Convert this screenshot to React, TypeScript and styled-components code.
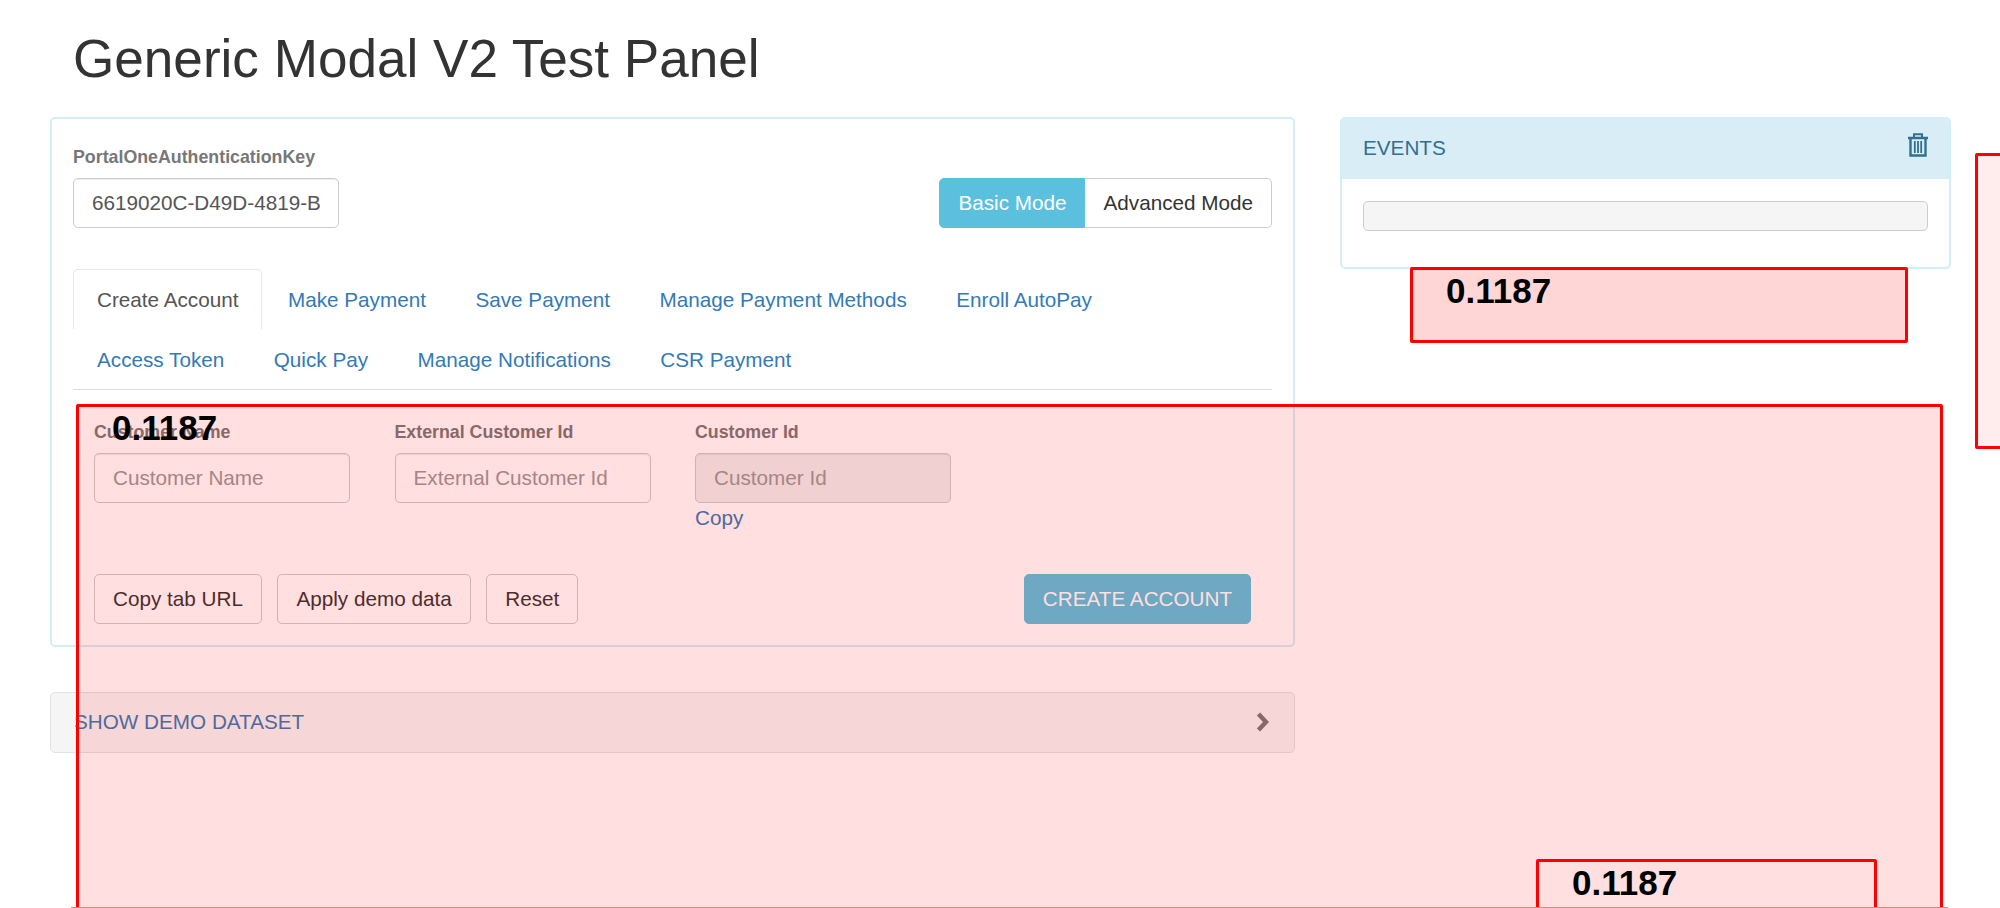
import styled, { createGlobalStyle } from 'styled-components';

const firstTabs = ['Make Payment', 'Save Payment', 'Manage Payment Methods', 'Enroll AutoPay'];
const secondTabs = ['Access Token', 'Quick Pay', 'Manage Notifications', 'CSR Payment'];

function App() {
  return (
    <Page>
      <GlobalStyle />
      <Title>Generic Modal V2 Test Panel</Title>
      <Columns>
        <MainColumn>
          <MainPanel>
            <TopRow>
              <div>
                <FieldLabel>PortalOneAuthenticationKey</FieldLabel>
                <KeyInput readOnly value="6619020C-D49D-4819-B" />
              </div>
              <ModeGroup>
                <ModeButton $active>Basic Mode</ModeButton>
                <ModeButton>Advanced Mode</ModeButton>
              </ModeGroup>
            </TopRow>
            <Tabs>
              <Tab $active>Create Account</Tab>
              {firstTabs.map((t) => (
                <Tab key={t}>{t}</Tab>
              ))}
              <Break />
              {secondTabs.map((t) => (
                <Tab key={t}>{t}</Tab>
              ))}
            </Tabs>
            <TabBody>
              <Fields>
                <Field>
                  <FieldLabel>Customer Name</FieldLabel>
                  <TextInput placeholder="Customer Name" />
                </Field>
                <Field>
                  <FieldLabel>External Customer Id</FieldLabel>
                  <TextInput placeholder="External Customer Id" />
                </Field>
                <Field>
                  <FieldLabel>Customer Id</FieldLabel>
                  <TextInput placeholder="Customer Id" disabled />
                  <CopyLink>Copy</CopyLink>
                </Field>
              </Fields>
              <Actions>
                <Button>Copy tab URL</Button>
                <Button>Apply demo data</Button>
                <Button>Reset</Button>
                <SubmitButton>CREATE ACCOUNT</SubmitButton>
              </Actions>
            </TabBody>
          </MainPanel>
          <DemoBar>
            <DemoLink>SHOW DEMO DATASET</DemoLink>
            <svg width="13" height="20" viewBox="0 0 13 20">
              <polyline points="2.5,2 10,10 2.5,18" fill="none" stroke="#777" strokeWidth="4.5" />
            </svg>
          </DemoBar>
        </MainColumn>
        <SideColumn>
          <EventsHeader>
            <EventsTitle>EVENTS</EventsTitle>
            <svg width="20" height="24" viewBox="0 0 20 24">
              <g fill="none" stroke="#31708f">
                <path d="M0 5h20" strokeWidth="2.4" />
                <path d="M6 4V1.2h8V4" strokeWidth="2" />
                <path d="M2.5 6v16.5h15V6" strokeWidth="2.4" />
                <path d="M6.8 8v12M10 8v12M13.2 8v12" strokeWidth="1.8" />
              </g>
            </svg>
          </EventsHeader>
          <EventsBody>
            <Well />
          </EventsBody>
        </SideColumn>
      </Columns>
      <Marker $left={76} $top={404} $width={1867} $height={520} $alpha={0.125}>
        <Score>0.1187</Score>
      </Marker>
      <Marker $left={1410} $top={267} $width={498} $height={76} $alpha={0.16}>
        <Score>0.1187</Score>
      </Marker>
      <Marker $left={1536} $top={859} $width={341} $height={70} $alpha={0}>
        <Score>0.1187</Score>
      </Marker>
      <Marker $left={1975} $top={153} $width={120} $height={296} $alpha={0.07} />
      <BottomEdge />
    </Page>
  );
}

const GlobalStyle = createGlobalStyle`
  html, body {
    margin: 0;
    padding: 0;
    background: #fff;
  }
  body {
    font-family: "Liberation Sans", Arial, sans-serif;
    font-size: 20.7px;
    color: #333;
  }
  * {
    box-sizing: border-box;
  }
`;

const Page = styled.div`
  position: relative;
  width: 2000px;
  height: 908px;
  overflow: hidden;
`;

const Title = styled.h1`
  margin: 0;
  padding: 29px 0 0 73px;
  height: 117px;
  font-size: 53.1px;
  font-weight: 400;
  line-height: 60px;
  color: #333;
`;

const Columns = styled.div`
  display: flex;
  padding-left: 50px;
  gap: 45px;
  align-items: flex-start;
`;

const MainColumn = styled.div`
  width: 1245px;
`;

const SideColumn = styled.div`
  width: 611px;
  height: 152px;
  border: 2px solid #d3eef6;
  border-radius: 5px;
  overflow: hidden;
`;

const MainPanel = styled.div`
  height: 530px;
  padding: 28px 21px 0;
  border: 2px solid #d3eef6;
  border-radius: 5px;
`;

const TopRow = styled.div`
  display: flex;
  justify-content: space-between;
  align-items: flex-end;
`;

const FieldLabel = styled.label`
  display: block;
  height: 20px;
  margin-bottom: 11px;
  font-size: 17.8px;
  font-weight: 700;
  line-height: 20px;
  color: #777;
`;

const TextInput = styled.input`
  display: block;
  width: 100%;
  height: 50px;
  padding: 0 18px;
  border: 1.5px solid #ccc;
  border-radius: 5px;
  background: #fff;
  font: inherit;
  color: #555;
  box-shadow: inset 0 1px 1px rgba(0, 0, 0, 0.075);

  &::placeholder {
    color: #999;
  }

  &:disabled {
    background: #eee;
  }
`;

const KeyInput = styled(TextInput)`
  width: 266px;
`;

const ModeGroup = styled.div`
  display: flex;
`;

const ModeButton = styled.button<{ $active?: boolean }>`
  height: 50px;
  padding: 0 18px;
  border: 1.5px solid ${({ $active }) => ($active ? '#5bc0de' : '#ccc')};
  border-left-width: ${({ $active }) => ($active ? '1.5px' : '0')};
  border-radius: ${({ $active }) => ($active ? '5px 0 0 5px' : '0 5px 5px 0')};
  background: ${({ $active }) => ($active ? '#5bc0de' : '#fff')};
  color: ${({ $active }) => ($active ? '#fff' : '#333')};
  font: inherit;
`;

const Tabs = styled.div`
  display: flex;
  flex-wrap: wrap;
  margin-top: 41px;
  padding-bottom: 0;
  border-bottom: 1.5px solid #ddd;
`;

const Break = styled.div`
  flex-basis: 100%;
  height: 0;
`;

const Tab = styled.a<{ $active?: boolean }>`
  height: 60px;
  margin-right: 1.5px;
  padding: 0 23px;
  border: 1.5px solid ${({ $active }) => ($active ? '#e6e6e6' : 'transparent')};
  border-bottom: 0;
  border-radius: 5px 5px 0 0;
  color: ${({ $active }) => ($active ? '#555' : '#337ab7')};
  line-height: 60px;
`;

const TabBody = styled.div`
  padding: 32px 21px 0;
`;

const Fields = styled.div`
  display: flex;
  gap: 44.5px;
  min-height: 116px;
`;

const Field = styled.div`
  width: 256px;
`;

const CopyLink = styled.a`
  display: block;
  margin-top: 3px;
  color: #337ab7;
  line-height: 24px;
`;

const Actions = styled.div`
  display: flex;
  gap: 15.5px;
  margin-top: 36px;
`;

const Button = styled.button`
  height: 50px;
  padding: 0 18px;
  border: 1.5px solid #ccc;
  border-radius: 5px;
  background: #fff;
  color: #333;
  font: inherit;
`;

const SubmitButton = styled(Button)`
  margin-left: auto;
  width: 227px;
  padding: 0;
  border-color: #5bc0de;
  background: #5bc0de;
  color: #fff;
`;

const DemoBar = styled.div`
  display: flex;
  justify-content: space-between;
  align-items: center;
  height: 61px;
  margin-top: 45px;
  padding: 0 25px 1px 23px;
  border: 1.5px solid #e2e2e2;
  border-radius: 5px;
  background: #f5f5f5;
`;

const DemoLink = styled.a`
  color: #337ab7;
`;

const EventsHeader = styled.div`
  display: flex;
  justify-content: space-between;
  height: 60px;
  padding: 14px 21px 0;
  background: #d9edf7;
`;

const EventsTitle = styled.span`
  color: #31708f;
  line-height: 30px;
`;

const EventsBody = styled.div`
  padding: 22px 21px 0;
`;

const Well = styled.div`
  height: 30px;
  border: 1.5px solid #ccc;
  border-radius: 5px;
  background: #f5f5f5;
`;

const Marker = styled.div<{ $left: number; $top: number; $width: number; $height: number; $alpha: number }>`
  position: absolute;
  left: ${({ $left }) => $left}px;
  top: ${({ $top }) => $top}px;
  width: ${({ $width }) => $width}px;
  height: ${({ $height }) => $height}px;
  padding: 1px 0 0 33px;
  border: 3px solid #ff0000;
  border-radius: 2px;
  background: rgba(255, 0, 0, ${({ $alpha }) => $alpha});
`;

const Score = styled.span`
  display: block;
  font-size: 35px;
  font-weight: 700;
  line-height: 40px;
  color: #000;
`;

const BottomEdge = styled.div`
  position: absolute;
  left: 71px;
  bottom: 0;
  width: 1877px;
  height: 1px;
  background: #ff7878;
`;

export default App;
